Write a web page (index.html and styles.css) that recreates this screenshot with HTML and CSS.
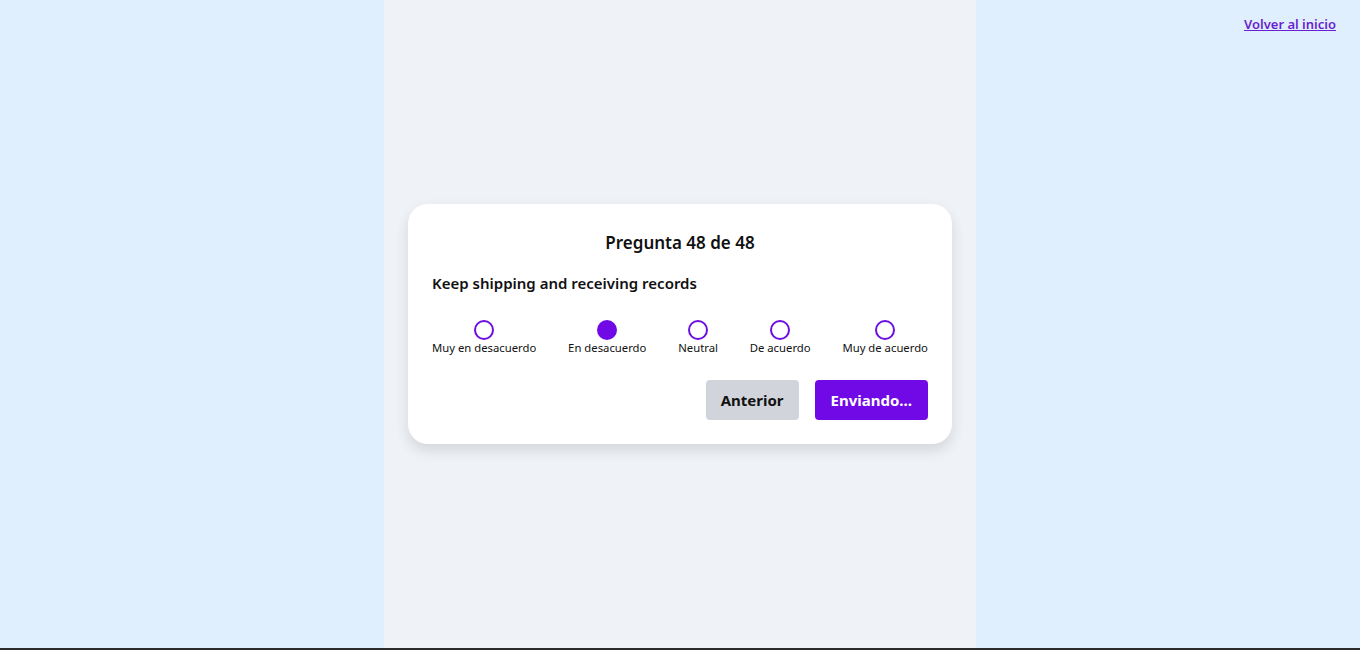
FILE: index.html
```html
<!DOCTYPE html>
<html lang="es">
<head>
<meta charset="utf-8">
<title>Pregunta 48 de 48</title>
<link rel="stylesheet" href="styles.css">
</head>
<body>
<a class="home-link" href="#">Volver al inicio</a>
<div class="page">
  <main class="column">
    <section class="card">
      <h1 class="title">Pregunta 48 de 48</h1>
      <p class="question">Keep shipping and receiving records</p>
      <div class="options">
        <label class="option"><span class="radio"></span><span class="label">Muy en desacuerdo</span></label>
        <label class="option"><span class="radio checked"></span><span class="label">En desacuerdo</span></label>
        <label class="option"><span class="radio"></span><span class="label">Neutral</span></label>
        <label class="option"><span class="radio"></span><span class="label">De acuerdo</span></label>
        <label class="option"><span class="radio"></span><span class="label">Muy de acuerdo</span></label>
      </div>
      <div class="actions">
        <button class="btn btn-secondary">Anterior</button>
        <button class="btn btn-primary">Enviando...</button>
      </div>
    </section>
  </main>
</div>
</body>
</html>
```
FILE: styles.css
```css
* { box-sizing: border-box; }
html, body { margin: 0; padding: 0; }
body {
  font-family: "Noto Sans", "Open Sans", sans-serif;
  background: #dfeffd;
  color: #111;
  height: 650px;
  overflow: hidden;
  border-bottom: 2px solid #2b2b2b;
}
.home-link {
  position: absolute;
  top: 15px;
  right: 24px;
  font-size: 13px;
  font-weight: 600;
  color: #6a1fd0;
  text-decoration: underline;
}
.page {
  display: flex;
  justify-content: center;
  height: 648px;
}
.column {
  width: 592px;
  background: #eff2f7;
  display: flex;
  align-items: center;
  justify-content: center;
}
.card {
  width: 544px;
  background: #fff;
  border-radius: 20px;
  box-shadow: 0 6px 14px rgba(0,0,0,0.12);
  padding: 26px 24px 24px;
}
.title {
  margin: 0;
  text-align: center;
  font-size: 17px;
  font-weight: 600;
  line-height: 26px;
}
.question {
  margin: 15px 0 0;
  font-size: 15px;
  font-weight: 600;
  line-height: 24px;
}
.options {
  display: flex;
  justify-content: space-between;
  margin-top: 25px;
}
.option {
  display: flex;
  flex-direction: column;
  align-items: center;
  gap: 0;
}
.radio {
  width: 20px;
  height: 20px;
  border-radius: 50%;
  border: 2px solid #6b10de;
  background: #fff;
}
.radio.checked {
  background: #7009e6;
  border-color: #7009e6;
}
.label {
  font-size: 11.3px;
  line-height: 16px;
  color: #111;
}
.actions {
  display: flex;
  justify-content: flex-end;
  gap: 16px;
  margin-top: 24px;
}
.btn {
  height: 40px;
  border: none;
  border-radius: 4px;
  font-family: inherit;
  font-size: 15px;
  font-weight: 700;
  padding: 0 15px;
}
.btn-secondary {
  background: #d1d5db;
  color: #111;
}
.btn-primary {
  background: #7009e6;
  color: #fff;
  padding: 0 16px;
}
```
